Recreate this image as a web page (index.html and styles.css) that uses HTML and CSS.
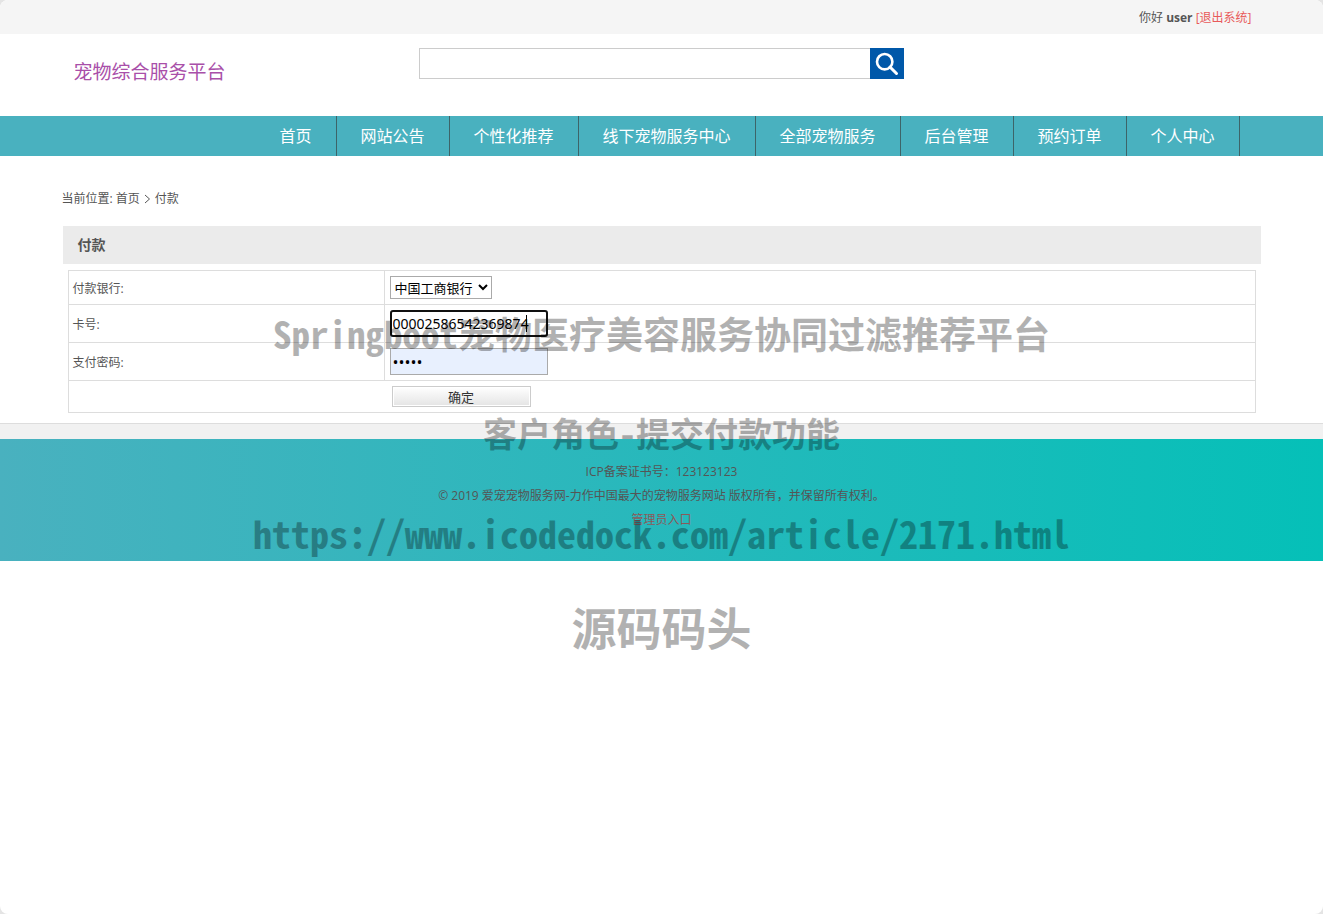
FILE: index.html
```html
<!DOCTYPE html>
<html lang="zh-CN">
<head>
<meta charset="utf-8">
<title>付款</title>
<link rel="stylesheet" href="styles.css">
</head>
<body>
<div class="topbar">
  <div class="container topbar-inner">
    <span>你好</span> <strong>user</strong> <a class="logout" href="#">[退出系统]</a>
  </div>
</div>
<header class="container header">
  <a class="logo" href="#">宠物综合服务平台</a>
  <form class="search" role="search">
    <input class="search-input" type="text" aria-label="搜索">
    <button class="search-button" type="button" aria-label="搜索">
      <svg width="24" height="24" viewBox="0 0 24 24" fill="none" stroke="currentColor"><circle cx="9.700" cy="9.700" r="7.700" stroke-width="2.600"/><path d="M15 15l6.500 6.500" stroke-width="3" stroke-linecap="round"/></svg>
    </button>
  </form>
</header>
<nav class="nav">
  <div class="container nav-inner">
    <a href="#">首页</a><a href="#">网站公告</a><a href="#">个性化推荐</a><a href="#">线下宠物服务中心</a><a href="#">全部宠物服务</a><a href="#">后台管理</a><a href="#">预约订单</a><a href="#">个人中心</a>
  </div>
</nav>
<main class="container main">
  <div class="crumbs">
    <span>当前位置:</span><a href="#">首页</a>
    <svg width="7" height="10" viewBox="0 0 7 10" fill="none" stroke="currentColor"><path d="M1 1l4.500 4L1 9"/></svg>
    <span class="crumb-here">付款</span>
  </div>
  <h1 class="title">付款</h1>
  <form class="pay">
    <table class="pay-table">
      <tr class="row-bank"><td class="label"><label for="bank">付款银行:</label></td><td><select id="bank" class="bank"><option>中国工商银行</option></select></td></tr>
      <tr class="row-field"><td class="label"><label for="card">卡号:</label></td><td><div class="field-wrap"><input id="card" class="field field-active" type="text" value="00002586542369874"><span class="caret"></span></div></td></tr>
      <tr class="row-field"><td class="label"><label for="pwd">支付密码:</label></td><td><input id="pwd" class="field field-filled" type="password" value="12345"></td></tr>
      <tr class="row-submit"><td colspan="2"><button class="submit" type="button">确定</button></td></tr>
    </table>
  </form>
</main>
<footer class="footer">
  <div class="footer-body">
    <p>ICP备案证书号：123123123</p>
    <p>© 2019 爱宠宠物服务网-力作中国最大的宠物服务网站 版权所有，并保留所有权利。</p>
    <p><a class="admin" href="#">管理员入口</a></p>
  </div>
</footer>
<div class="watermark">
  <div class="mark mark-name">Springboot宠物医疗美容服务协同过滤推荐平台</div>
  <div class="mark mark-role">客户角色-提交付款功能</div>
  <div class="mark mark-url">https://www.icodedock.com/article/2171.html</div>
  <div class="mark mark-site">源码码头</div>
</div>
</body>
</html>
```
FILE: styles.css
```css
* { box-sizing: border-box; }
html { background: #e4e4e4; }
body {
  margin: 0;
  position: relative;
  min-height: 100vh;
  overflow: hidden;
  border-radius: 8px;
  background: #fff;
  color: #555;
  font: 12px/24px "Open Sans", "Noto Sans CJK SC", sans-serif;
}
a { color: inherit; text-decoration: none; }
p { margin: 0; }
.container { max-width: 1200px; margin: 0 auto; }
.topbar { background: #f5f5f5; }
.topbar-inner { height: 34px; padding-right: 10px; line-height: 36px; text-align: right; }
.logout { color: #e85a5a; }
.header {
  display: grid;
  grid-template-columns: 357px 485px;
  height: 82px;
  padding-top: 14px;
}
.logo {
  padding: 10px 0 0 12px;
  color: #a94fa9;
  font-size: 19px;
  line-height: 28px;
}
.search { display: flex; height: 31px; }
.search-input {
  flex: 1;
  min-width: 0;
  border: 1px solid #ccc;
  border-right: 0;
  outline: 0;
  padding: 0 8px;
  border-radius: 0;
}
.search-button {
  display: grid;
  place-items: center;
  width: 34px;
  padding: 0;
  border: 0;
  background: #0058a9;
  color: #fff;
}
.nav { background: #49b1bf; }
.nav-inner { display: flex; padding-left: 194px; }
.nav a {
  flex: none;
  padding: 0 24px;
  border-right: 1px solid #3d6468;
  color: #fff;
  font-size: 16px;
  line-height: 40px;
}
.main { padding: 31px 0 10px; }
.crumbs { display: flex; align-items: center; gap: 3px; }
.crumbs svg { margin: 0 1px; }
.title {
  margin: 15px 1px 6px;
  padding-left: 15px;
  background: #ebebeb;
  font-size: 14px;
  font-weight: 700;
  line-height: 38px;
}
.pay { padding: 0 6px; }
.pay-table { width: 100%; border-collapse: collapse; table-layout: fixed; }
.pay-table td { padding: 0 5px; border: 1px solid #ddd; vertical-align: middle; }
.pay-table .label { width: 316px; padding: 2px 4px 0; }
.row-bank { height: 34px; }
.row-field { height: 38px; }
.row-submit { height: 32px; }
.bank, .field, .submit { display: block; font: 13px "Open Sans", "Noto Sans CJK SC", sans-serif; }
.bank {
  width: 102px;
  height: 23px;
  padding: 0;
  border: 1px solid #aaa;
  background: #fff;
  color: #000;
}
.field-wrap { position: relative; }
.field {
  width: 158px;
  height: 27px;
  padding: 0 2px;
  border: 1px solid #aaa;
  color: #000;
  font-size: 14px;
  outline: 0;
}
.field-active {
  padding: 0 1px;
  border: 2px solid #101010;
  border-radius: 3px;
  font-family: "Noto Sans", sans-serif;
  font-size: 14px;
}
.caret {
  position: absolute;
  top: 5px;
  left: 136px;
  width: 1px;
  height: 17px;
  background: #000;
}
.field-filled { background: #e8f0fe; font-size: 16px; }
.submit {
  width: 139px;
  height: 21px;
  margin-left: 318px;
  padding: 0;
  border: 1px solid #ccc;
  box-shadow: inset 0 0 0 1px #fff;
  background: linear-gradient(#fff, #e4e4e4);
  color: #333;
}
.footer { padding-top: 15px; border-top: 1px solid #ddd; background: #f1f1f1; }
.footer-body {
  padding: 21px 0 29px;
  background: linear-gradient(to right, #49b1bf, #05c0b8);
  text-align: center;
}
.admin { color: #8a5a5a; }
.watermark {
  position: absolute;
  top: 283px;
  left: 0;
  right: 0;
  pointer-events: none;
  color: #000;
  opacity: .3;
  font-family: "Noto Sans Mono CJK SC", "DejaVu Sans Mono", "Noto Sans CJK SC", monospace;
  font-weight: 700;
  line-height: 100px;
  text-align: center;
  white-space: nowrap;
}
.mark-name { font-size: 37px; }
.mark-role { font-size: 34px; }
.mark-url { font-size: 38px; }
.mark-site { font-size: 45px; line-height: 88px; }
```
